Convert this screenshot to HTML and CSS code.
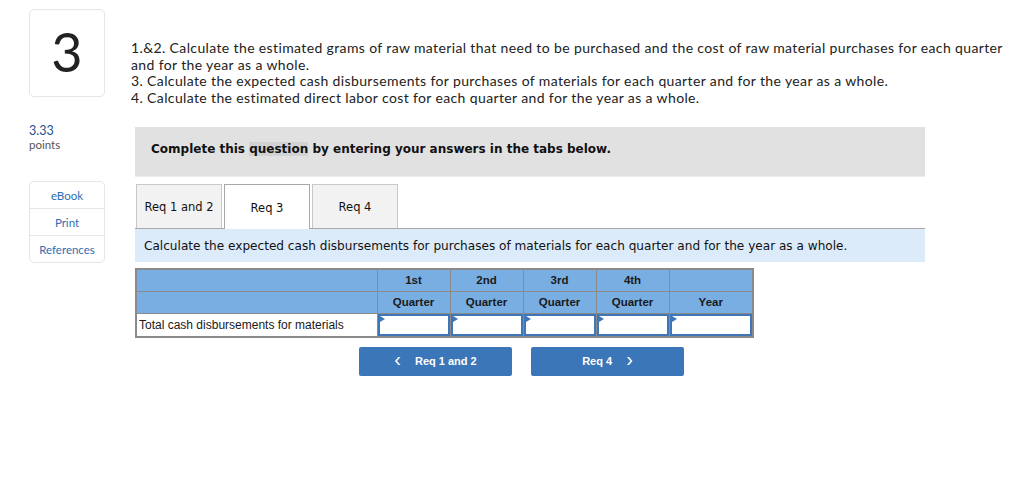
FILE: index.html
```html
<!DOCTYPE html>
<html>
<head>
<meta charset="utf-8">
<link rel="stylesheet" href="styles.css">
</head>
<body>
<div class="page">
  <aside class="side">
    <div class="qnum">3</div>
    <div class="score">3.33</div>
    <div class="pts">points</div>
    <div class="links">
      <div class="link">eBook</div>
      <div class="link">Print</div>
      <div class="link">References</div>
    </div>
  </aside>
  <main class="main">
    <div class="prompt">
      <p>1.&amp;2. Calculate the estimated grams of raw material that need to be purchased and the cost of raw material purchases for each quarter and for the year as a whole.</p>
      <p>3. Calculate the expected cash disbursements for purchases of materials for each quarter and for the year as a whole.</p>
      <p>4. Calculate the estimated direct labor cost for each quarter and for the year as a whole.</p>
    </div>
    <div class="instr">Complete this <span class="hl">question</span> by entering your answers in the tabs below.</div>
    <div class="tabs">
      <div class="tab">Req 1 and 2</div>
      <div class="tab active">Req 3</div>
      <div class="tab">Req 4</div>
    </div>
    <div class="desc">Calculate the expected cash disbursements for purchases of materials for each quarter and for the year as a whole.</div>
    <table class="grid">
      <colgroup>
        <col class="c-lbl"><col class="c-q"><col class="c-q"><col class="c-q"><col class="c-q"><col class="c-yr">
      </colgroup>
      <tr class="h1">
        <th></th><th>1st</th><th>2nd</th><th>3rd</th><th>4th</th><th></th>
      </tr>
      <tr class="h2">
        <th></th><th>Quarter</th><th>Quarter</th><th>Quarter</th><th>Quarter</th><th>Year</th>
      </tr>
      <tr>
        <td class="lbl">Total cash disbursements for materials</td>
        <td class="in"><div class="box"></div></td>
        <td class="in"><div class="box"></div></td>
        <td class="in"><div class="box"></div></td>
        <td class="in"><div class="box"></div></td>
        <td class="in"><div class="box"></div></td>
      </tr>
    </table>
    <div class="nav">
      <div class="btn"><span class="chev">&lsaquo;</span>Req 1 and 2</div>
      <div class="btn">Req 4<span class="chev r">&rsaquo;</span></div>
    </div>
  </main>
</div>
</body>
</html>
```
FILE: styles.css
```css
html, body { margin: 0; padding: 0; background: #fff; }
body { font-family: "Lato", "Liberation Sans", sans-serif; color: #222; }
.page { display: flex; padding: 9px 0 0 29px; }
.side { width: 76px; flex: none; }
.qnum {
  box-sizing: border-box; width: 76px; height: 88px;
  border: 1px solid #e6e6e6; border-radius: 5px;
  display: flex; align-items: center; justify-content: center;
  font-family: "Lato", sans-serif; font-size: 54px; font-weight: 400; color: #222;
  padding-bottom: 4px;
}
.score { margin-top: 26px; font-family: "Lato", sans-serif; font-size: 12.5px; color: #1f4e8c; line-height: 15px; }
.pts { font-family: "Lato", sans-serif; font-size: 11.5px; color: #555; line-height: 14px; }
.links {
  margin-top: 29px; box-sizing: border-box; width: 76px;
  border: 1px solid #e6e6e6; border-radius: 5px;
}
.link {
  height: 27px; display: flex; align-items: center; justify-content: center;
  font-family: "Lato", sans-serif; font-size: 11.5px; color: #2f6db3;
  border-top: 1px solid #e6e6e6; box-sizing: border-box;
}
.link:first-child { border-top: none; height: 26px; }
.main { margin-left: 26px; width: 890px; }
.prompt { padding: 31px 0 0 0; font-family: "Lato", sans-serif; font-size: 14px; letter-spacing: 0.37px; line-height: 16.7px; color: #222; }
.prompt p { margin: 0; }
.instr {
  margin: 20px 0 0 4px; width: 790px; height: 50px; box-sizing: border-box;
  background: #e1e1e1; border-bottom: 1px solid #ececec;
  padding: 15px 0 0 16px;
  font-family: "DejaVu Sans", Verdana, sans-serif; font-weight: bold; font-size: 12px; color: #111;
}
.hl { background: #d2d2d2; }
.tabs { display: flex; gap: 2px; margin: 7px 0 0 5px; height: 44px; position: relative; z-index: 1; }
.tab {
  width: 86px; box-sizing: border-box; height: 44px;
  background: #f2f2f2; border: 1px solid #c8c8c8; border-bottom: none;
  display: flex; align-items: center; justify-content: center;
  font-family: "DejaVu Sans", Verdana, sans-serif; font-size: 11.5px; color: #111;
  padding-top: 2px;
}
.active { background: #fff; border-color: #a8a8a8; height: 45px; }
.desc {
  margin-left: 4px; width: 790px; height: 34px; box-sizing: border-box;
  background: #dcebf9; border-top: 1px solid #a8a8a8;
  padding: 10px 0 0 9px;
  font-family: "DejaVu Sans", Verdana, sans-serif; font-size: 12.1px; color: #111;
}
.grid {
  margin: 6px 0 0 4px; border-collapse: collapse; table-layout: fixed; width: 617px;
  font-family: "Liberation Sans", Arial, sans-serif; font-size: 12px;
  border: 2px solid #8a8a8a;
}
.c-lbl { width: 241px; }
.c-q { width: 73px; }
.c-yr { width: 84px; }
.grid th {
  background: #79aee3; padding: 0; border: 1px solid #8a8a8a;
  font-weight: bold; font-size: 11.5px; color: #1a1a1a; line-height: 14px;
}
.h1 th { height: 20px; vertical-align: middle; padding-bottom: 1px; }
.h2 th { height: 21px; vertical-align: middle; }
.grid td { height: 22px; padding: 0; border: 1px solid #8a8a8a; }
.grid td.lbl { padding-left: 2px; color: #1a1a1a; font-size: 12px; }
.box {
  height: 18px; border: 2px solid #3f76b8; background: #fff;
  position: relative;
}
.box::before {
  content: ""; position: absolute; left: 0; top: 0;
  border-left: 5px solid #3f76b8; border-top: 3px solid transparent; border-bottom: 3px solid transparent;
}
.nav { display: flex; gap: 19px; margin: 9px 0 0 228px; }
.btn {
  width: 153px; height: 29px; background: #3b76b8; border-radius: 2px;
  display: flex; align-items: center; justify-content: center;
  font-family: "Liberation Sans", Arial, sans-serif; font-weight: bold; font-size: 11px; color: #fff;
}
.chev { font-size: 20px; font-weight: normal; margin-right: 14px; line-height: 1; position: relative; top: -2px; }
.chev.r { margin-right: 0; margin-left: 14px; }
```
